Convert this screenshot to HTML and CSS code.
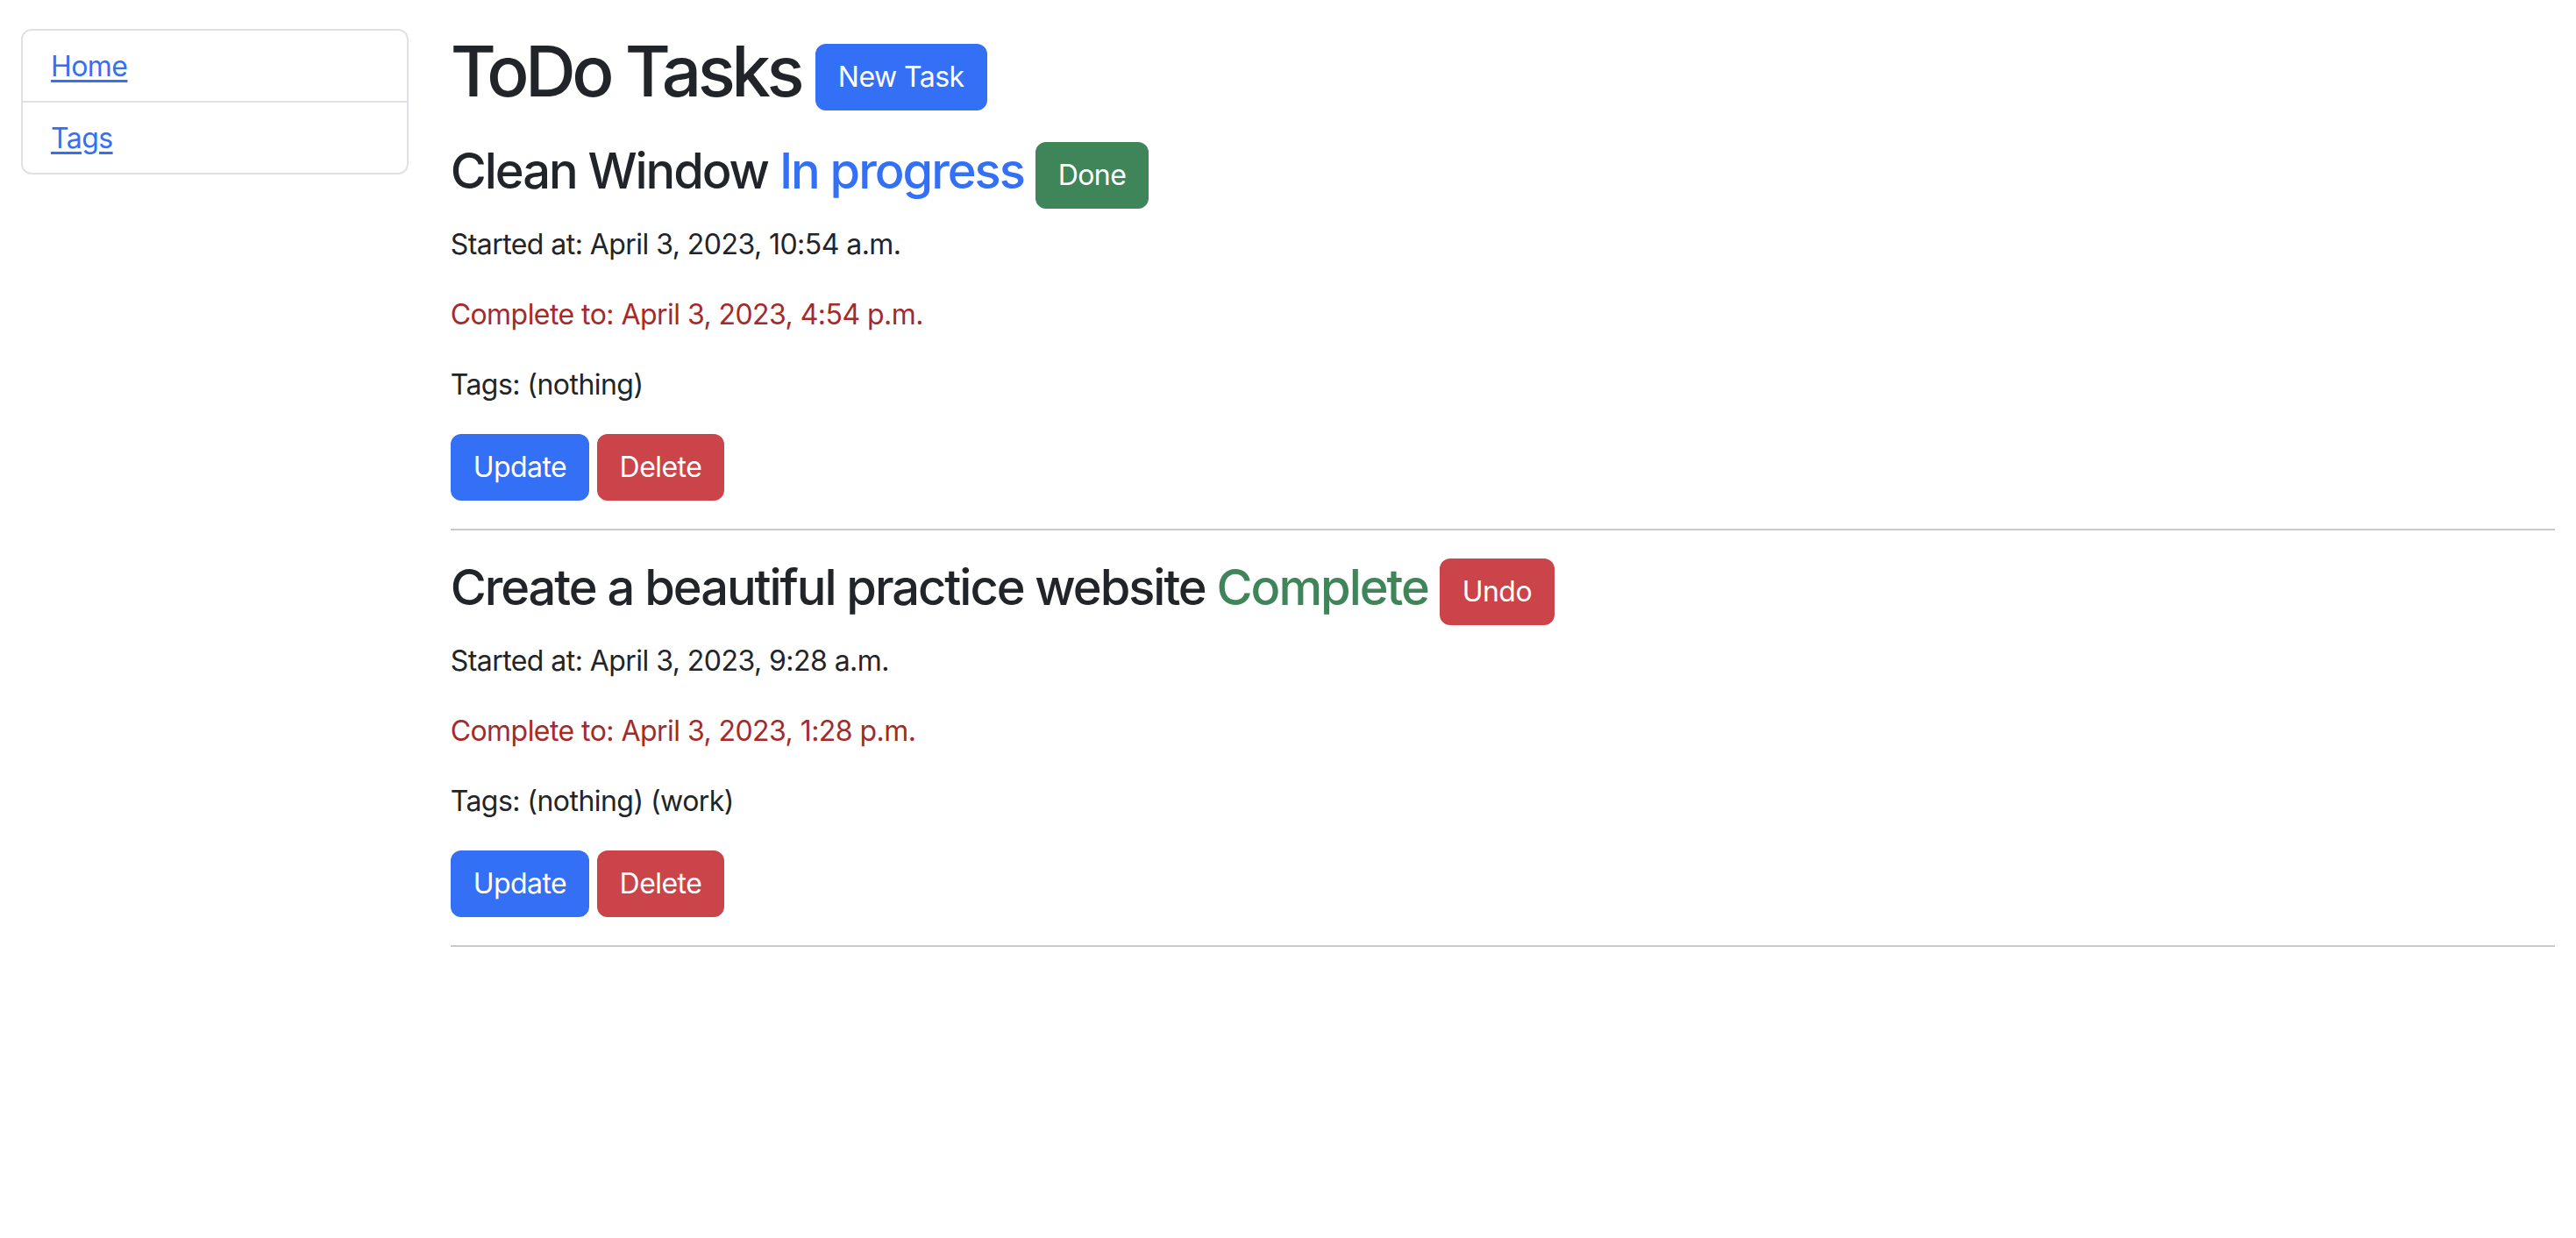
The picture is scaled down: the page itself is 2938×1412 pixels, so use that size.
FILE: index.html
```html
<!DOCTYPE html>
<html lang="en">
<head>
<meta charset="utf-8">
<title>ToDo Tasks</title>
<link rel="stylesheet" href="styles.css">
</head>
<body>
<div class="page">
  <aside class="sidebar">
    <ul class="nav-list">
      <li class="nav-item"><a href="#" class="nav-link">Home</a></li>
      <li class="nav-item"><a href="#" class="nav-link">Tags</a></li>
    </ul>
  </aside>
  <main class="main">
    <h1 class="page-title">ToDo Tasks <a href="#" class="btn btn-primary">New Task</a></h1>

    <div class="task">
      <h3 class="task-title">Clean Window <span class="status-progress">In progress</span> <a href="#" class="btn btn-success">Done</a></h3>
      <p>Started at: April 3, 2023, 10:54 a.m.</p>
      <p class="deadline">Complete to: April 3, 2023, 4:54 p.m.</p>
      <p>Tags: (nothing)</p>
      <div class="actions"><a href="#" class="btn btn-primary">Update</a> <a href="#" class="btn btn-danger">Delete</a></div>
      <hr class="divider">
    </div>

    <div class="task">
      <h3 class="task-title">Create a beautiful practice website <span class="status-complete">Complete</span> <a href="#" class="btn btn-danger">Undo</a></h3>
      <p>Started at: April 3, 2023, 9:28 a.m.</p>
      <p class="deadline">Complete to: April 3, 2023, 1:28 p.m.</p>
      <p>Tags: (nothing) (work)</p>
      <div class="actions"><a href="#" class="btn btn-primary">Update</a> <a href="#" class="btn btn-danger">Delete</a></div>
      <hr class="divider">
    </div>
  </main>
</div>
</body>
</html>
```

FILE: styles.css
```css
* { box-sizing: border-box; }

body {
  margin: 0;
  font-family: Inter, "Liberation Sans", sans-serif;
  font-size: 32px;
  line-height: 1.5;
  color: #212529;
  background: #fff;
  letter-spacing: -0.55px;
}

.page {
  display: grid;
  grid-template-columns: 2fr 10fr;
  padding-top: 33px;
}

.sidebar, .main {
  padding: 0 24px;
  min-width: 0;
}

.nav-list {
  list-style: none;
  margin: 0;
  padding: 0;
  border: 2px solid #dee2e6;
  border-radius: 12px;
}

.nav-item {
  padding: 17px 32px 15px;
}

.nav-item + .nav-item {
  border-top: 2px solid #dee2e6;
}

.nav-link {
  color: #3470f5;
  text-decoration: underline;
  text-underline-offset: 4px;
  text-decoration-thickness: 3px;
}

.page-title {
  font-size: 80px;
  font-weight: 500;
  line-height: 1.2;
  margin: 0 0 33px;
  letter-spacing: -4.5px;
}

.task-title {
  font-size: 56px;
  font-weight: 500;
  line-height: 1.2;
  margin: 0 0 17px;
  letter-spacing: -2.05px;
}

.status-progress { color: #3470f5; }
.status-complete { color: #3f855a; }

p {
  margin: 0 0 32px;
}

.deadline { color: #a52a2a; }

.btn {
  display: inline-block;
  vertical-align: middle;
  font-size: 32px;
  font-weight: 400;
  line-height: 48px;
  padding: 12px 24px;
  border: 2px solid transparent;
  border-radius: 12px;
  color: #fff;
  text-decoration: none;
  letter-spacing: -0.55px;
}

.btn-primary { background: #3470f5; border-color: #3470f5; }
.btn-success { background: #3f855a; border-color: #3f855a; }
.btn-danger { background: #cb444a; border-color: #cb444a; }

.divider {
  margin: 32px 0;
  border: 0;
  border-top: 2px solid #c8c9ca;
}
```
